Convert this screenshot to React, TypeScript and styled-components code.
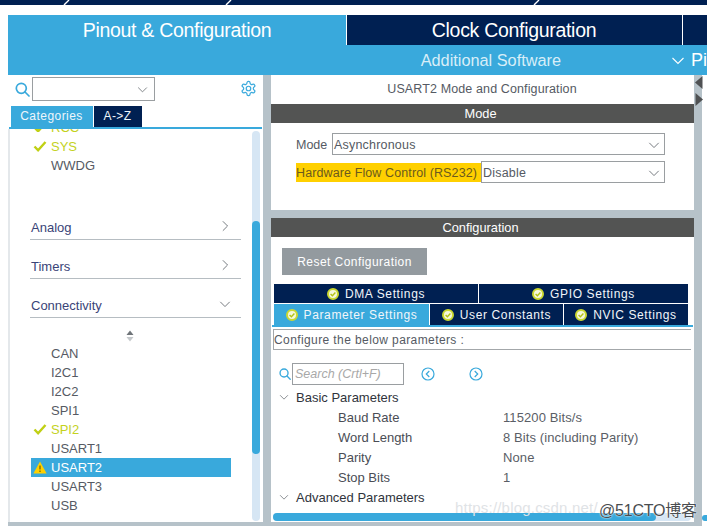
import React from "react";
import styled, { createGlobalStyle } from "styled-components";

const BLUE = "#39a9dc";
const NAVY = "#002052";
const GREY = "#b6c2c9";
const DARK = "#535453";

const Global = createGlobalStyle`
  html, body { margin: 0; padding: 0; background: #fff; }
  body { font-family: "Liberation Sans", Arial, sans-serif; width: 707px; height: 526px; overflow: hidden; position: relative; }
  * { box-sizing: border-box; }
`;

const Page = styled.div`display: flex; flex-direction: column; width: 707px; height: 526px; overflow: hidden; position: relative;`;
const TopStrip = styled.svg`display: block; width: 707px; height: 5px; flex: none; margin-bottom: 10px;`;

const Header = styled.div`display: flex; height: 60px; margin-left: 8px; flex: none;`;
const MainTab = styled.div`
  width: 338px; flex: none; background: ${BLUE}; color: #fff; font-size: 19.5px; text-align: center; padding-top: 4px; line-height: 23px; letter-spacing: -0.3px;
`;
const HeaderRight = styled.div`flex: 1; min-width: 0; display: flex; flex-direction: column; padding-left: 1px; background: linear-gradient(#fff 30px, ${BLUE} 30px);`;
const HeaderTop = styled.div`display: flex; height: 30px; gap: 1px;`;
const ClockTab = styled.div`width: 335px; flex: none; background: ${NAVY}; color: #fff; font-size: 19.5px; text-align: center; line-height: 30px; padding-right: 1px; letter-spacing: -0.3px;`;
const NextTab = styled.div`flex: 1; background: ${NAVY};`;
const HeaderBottom = styled.div`height: 30px; margin-left: -1px; background: ${BLUE}; display: flex; align-items: center;`;
const SoftWrap = styled.div`width: 325px; flex: none; text-align: right; font-size: 16.3px; padding-right: 110px; white-space: nowrap; color: #d8eef8;`;
const PinLabel = styled.div`font-size: 18px; color: #fff; margin-left: 6px;`;

const Body = styled.div`
  flex: 1; display: flex; margin-left: 8px; width: 694px; background: ${GREY}; padding-bottom: 4px; min-height: 0; position: relative;
`;
const LeftPanel = styled.div`width: 255px; flex: none; background: #fff; display: flex; flex-direction: column; min-height: 0;`;
const SearchRow = styled.div`display: flex; align-items: center; height: 27px; padding: 1px 6px 0 7px; margin-bottom: 4px;`;
const MiniSelect = styled.div`
  width: 123px; height: 24px; border: 1px solid #9a9ea1; margin-left: 2px; display: flex; align-items: center; justify-content: flex-end; padding-right: 6px;
`;
const GearSlot = styled.div`margin-left: auto; display: flex; margin-top: -1px;`;
const CatTabs = styled.div`display: flex; gap: 1px; padding-left: 3px; height: 21px; flex: none;`;
const CatTab = styled.div<{ $active?: boolean }>`
  background: ${(p) => (p.$active ? BLUE : NAVY)}; color: #eef6fb; width: ${(p) => (p.$active ? 82 : 48)}px; font-size: 12px; letter-spacing: 0.45px;
  line-height: 21px; text-align: center; padding-right: 1px;
`;
const CatLine = styled.div`height: 2px; background: ${BLUE}; margin: 0 1px; flex: none;`;
const ListArea = styled.div`flex: 1; position: relative; overflow: hidden; border-left: 2px solid #e4e8eb; min-height: 0;`;
const ClippedTop = styled.div`height: 3px; overflow: hidden; margin-bottom: 5px; position: relative;`;
const ClippedText = styled.div`margin-top: -11px;`;
const ItemRow = styled.div<{ $selected?: boolean; $state?: "ok" | "warn" }>`
  height: 19px; width: 200px; margin-left: 21px; display: flex; align-items: center; padding-left: 20px; position: relative;
  font-size: 13px;
  color: ${(p) => (p.$selected ? "#fff" : p.$state === "ok" ? "#c4d21e" : "#565a63")};
  background: ${(p) => (p.$selected ? BLUE : "transparent")};
`;
const ItemIcon = styled.span`position: absolute; left: 2px; top: 3px; display: flex;`;
const Group = styled.div<{ $gap: number }>`
  margin: ${(p) => p.$gap}px 0 0 20px; width: 211px; height: 22px; border-bottom: 1px solid #b6bdc2; display: flex; justify-content: space-between; align-items: flex-start;
  padding: 0 10px 0 1px; font-size: 13px; color: #3a4478; line-height: 19px;
  svg { margin-top: 2px; }
`;
const Sorter = styled.div`margin: 9px 0 0 0; height: 17px; padding-left: 116px; display: flex; align-items: center;`;
const VTrack = styled.div`position: absolute; right: 3px; top: 2px; bottom: 1px; width: 8px; border-radius: 4px; background: #d6e6f4;`;
const VThumb = styled.div`position: absolute; left: 0; right: 0; top: 90px; height: 233px; border-radius: 4px; background: ${BLUE};`;

const Splitter = styled.div`width: 8px; flex: none;`;
const RightPanel = styled.div`width: 423px; flex: none; display: flex; flex-direction: column; min-height: 0;`;
const ModeSection = styled.div`height: 135px; flex: none; background: #fff; margin-bottom: 8px;`;
const PanelTitle = styled.div`height: 29px; text-align: center; font-size: 12.5px; line-height: 29px; color: #555a63; padding-right: 1px; letter-spacing: 0.12px;`;
const SectionBar = styled.div`height: 19px; background: ${DARK}; color: #fff; font-size: 12.8px; text-align: center; line-height: 19px; flex: none; padding-right: 4px;`;
const FormRow = styled.div<{ $top: number }>`display: flex; align-items: center; margin: ${(p) => p.$top}px 0 0 25px; height: 22px; font-size: 12.5px; color: #555a63; width: 369px;`;
const ModeLabel = styled.div`width: 36px; flex: none; padding-top: 1px;`;
const FlowLabel = styled.div`width: 185px; flex: none; background: #ffd000; height: 19px; line-height: 20px; color: #6b5a1e; white-space: nowrap; letter-spacing: 0.11px;`;
const SelectBox = styled.div`
  flex: 1; height: 22px; border: 1px solid #9a9ea1; display: flex; align-items: center; justify-content: space-between; padding: 1px 4px 0 1px;
  color: #555a63; letter-spacing: 0.2px;
`;

const ConfigSection = styled.div`flex: 1; background: #fff; display: flex; flex-direction: column; position: relative; overflow: hidden; min-height: 0;`;
const ResetButton = styled.div`
  width: 145px; height: 27px; margin: 11px 0 0 11px; background: #939a9f; color: #fff; font-size: 12px; letter-spacing: 0.45px; line-height: 28px; text-align: center; flex: none;
`;
const TabRow = styled.div<{ $top: number; $h: number }>`display: flex; margin: ${(p) => p.$top}px 0 0 3px; width: 414px; height: ${(p) => p.$h}px; gap: 1px; flex: none;`;
const SetTab = styled.div<{ $w?: number; $active?: boolean }>`
  ${(p) => (p.$w ? `width: ${p.$w}px; flex: none;` : "flex: 1;")}
  background: ${(p) => (p.$active ? BLUE : NAVY)}; color: #f2f6fa; font-size: 12px; letter-spacing: 0.62px; padding-top: 1px;
  display: flex; align-items: center; justify-content: center; gap: 6px; white-space: nowrap;
`;
const TabLine = styled.div`height: 2px; background: ${BLUE}; margin: 0 1px; flex: none;`;
const ConfigureBox = styled.div`
  height: 21px; margin: 2px 3px 0 2px; border: 1px solid #a3a7aa; border-right: 0; font-size: 12px; color: #555a63; letter-spacing: 0.4px; line-height: 20px; flex: none;
`;
const SearchTools = styled.div`display: flex; align-items: center; height: 22px; margin: 13px 0 0 8px; flex: none;`;
const SearchInput = styled.div`
  width: 112px; height: 22px; margin-left: 1px; border: 1px solid #9a9ea1; color: #a8a8a8; font-style: italic; font-size: 12.5px; line-height: 20px; padding-left: 2px; white-space: nowrap; overflow: hidden;
`;
const NavSlot = styled.div<{ $left: number }>`margin-left: ${(p) => p.$left}px; display: flex;`;
const Tree = styled.div`margin-top: 2px; font-size: 13px; height: 127px; overflow: hidden; flex: none;`;
const TreeHead = styled.div`height: 20px; display: flex; align-items: center; color: #30343c; padding-left: 8px; gap: 7px;`;
const TreeRow = styled.div`height: 20px; display: flex; align-items: center; padding-left: 67px; color: #4a4d55;`;
const TreeKey = styled.div`width: 165px; flex: none;`;
const TreeValue = styled.div`color: #5a5e66; letter-spacing: 0.1px;`;
const HTrack = styled.div`position: absolute; left: 2px; width: 418px; bottom: 1px; height: 8px; border-radius: 4px; background: #d6e6f4;`;
const HThumb = styled.div`position: absolute; left: 0; top: 0; bottom: 0; width: 383px; border-radius: 4px; background: ${BLUE};`;
const RightEdgeBlob = styled.div`position: absolute; left: 702px; top: 515px; width: 8px; height: 6px; border-radius: 4px 0 0 4px; background: ${BLUE};`;
const Watermark = styled.div`position: absolute; left: 455px; top: 499px; font-size: 15px; color: #dfe3e6; white-space: nowrap; letter-spacing: 0.2px;`;
const Watermark2 = styled.div`
  position: absolute; left: 599px; top: 497px; font-size: 16px; color: #4a4d50; white-space: nowrap; letter-spacing: -0.2px;
  font-family: "Liberation Sans", "Noto Sans CJK SC", sans-serif; text-shadow: 0 0 1px #fff, 0 0 2px #fff;
`;
const ArrowStack = styled.div`position: absolute; left: 686.5px; top: 1px; display: flex; flex-direction: column; gap: 4px;`;

const Chevron = ({ dir = "down", size = 14, color = "#6f7479" }: { dir?: "down" | "right"; size?: number; color?: string }) => (
  <svg width={size} height={size} viewBox="0 0 14 14" fill="none" stroke={color} strokeWidth="1.1">
    {dir === "down" ? <path d="M1.5 4.5 7 10l5.5-5.5" /> : <path d="M4.5 1.5 10 7l-5.5 5.5" />}
  </svg>
);
const Magnifier = ({ size = 15 }: { size?: number }) => (
  <svg width={size} height={size} viewBox="0 0 15 15" fill="none" stroke={BLUE} strokeWidth="1.7">
    <circle cx="6.3" cy="6.3" r="5" />
    <path d="m10 10 4 4" strokeLinecap="round" />
  </svg>
);
const Gear = () => (
  <svg width="17" height="17" viewBox="0 0 24 24" fill="none" stroke={BLUE} strokeWidth="1.7" strokeLinejoin="round">
    <path d="M12.2 2h-.4a2 2 0 0 0-2 2v.2a2 2 0 0 1-1 1.7l-.4.3a2 2 0 0 1-2 0l-.2-.1a2 2 0 0 0-2.7.7l-.2.4a2 2 0 0 0 .7 2.7l.2.1a2 2 0 0 1 1 1.7v.5a2 2 0 0 1-1 1.8l-.2.1a2 2 0 0 0-.7 2.7l.2.4a2 2 0 0 0 2.7.7l.2-.1a2 2 0 0 1 2 0l.4.3a2 2 0 0 1 1 1.7v.2a2 2 0 0 0 2 2h.4a2 2 0 0 0 2-2v-.2a2 2 0 0 1 1-1.7l.4-.3a2 2 0 0 1 2 0l.2.1a2 2 0 0 0 2.7-.7l.2-.4a2 2 0 0 0-.7-2.7l-.2-.1a2 2 0 0 1-1-1.8v-.5a2 2 0 0 1 1-1.7l.2-.1a2 2 0 0 0 .7-2.7l-.2-.4a2 2 0 0 0-2.7-.7l-.2.1a2 2 0 0 1-2 0l-.4-.3a2 2 0 0 1-1-1.7V4a2 2 0 0 0-2-2Z" />
    <circle cx="12" cy="12" r="3.2" />
  </svg>
);
const Tick = () => (
  <svg width="14" height="13" viewBox="0 0 14 13" fill="none" stroke="#c0d014" strokeWidth="2.4">
    <path d="m1.5 6.5 3.6 3.8L12.5 2" />
  </svg>
);
const Warn = () => (
  <svg width="14" height="13" viewBox="0 0 14 13">
    <path d="M7 .6 13.6 12.4H.4Z" fill="#ffd000" />
    <path d="M7 4.4v4.2M7 9.6v1.3" stroke="#5b5200" strokeWidth="1.1" />
  </svg>
);
const TabCheck = () => (
  <svg width="12" height="12" viewBox="0 0 12 12" style={{ flex: "none" }}>
    <circle cx="6" cy="6" r="5" fill="#f6f8dc" stroke="#cbd830" strokeWidth="2" />
    <path d="m3.6 6 1.8 1.8L8.4 4.6" fill="none" stroke="#b4c214" strokeWidth="1.4" />
  </svg>
);
const NavCircle = ({ dir }: { dir: "l" | "r" }) => (
  <svg width="14" height="14" viewBox="0 0 14 14" fill="none" stroke={BLUE} strokeWidth="1.2">
    <circle cx="7" cy="7" r="6" />
    <path d={dir === "l" ? "M8.3 4 5.3 7l3 3" : "M5.7 4l3 3-3 3"} />
  </svg>
);

const connectivity: { name: string; state?: "ok" | "warn"; selected?: boolean }[] = [
  { name: "CAN" },
  { name: "I2C1" },
  { name: "I2C2" },
  { name: "SPI1" },
  { name: "SPI2", state: "ok" },
  { name: "USART1" },
  { name: "USART2", state: "warn", selected: true },
  { name: "USART3" },
  { name: "USB" },
];

const params = [
  ["Baud Rate", "115200 Bits/s"],
  ["Word Length", "8 Bits (including Parity)"],
  ["Parity", "None"],
  ["Stop Bits", "1"],
];

export default function App() {
  return (
    <Page>
      <Global />
      <TopStrip viewBox="0 0 707 5">
        <rect width="707" height="5" fill={NAVY} />
        <path d="M64 5l5-5M226 5l5-5M534 5l5-5" stroke="#fff" strokeWidth="1.4" />
      </TopStrip>
      <Header>
        <MainTab>Pinout &amp; Configuration</MainTab>
        <HeaderRight>
          <HeaderTop>
            <ClockTab>Clock Configuration</ClockTab>
            <NextTab />
          </HeaderTop>
          <HeaderBottom>
            <SoftWrap>Additional Software</SoftWrap>
            <Chevron size={15} color="#fff" />
            <PinLabel>Pi</PinLabel>
          </HeaderBottom>
        </HeaderRight>
      </Header>
      <Body>
        <LeftPanel>
          <SearchRow>
            <Magnifier />
            <MiniSelect>
              <Chevron size={11} />
            </MiniSelect>
            <GearSlot>
              <Gear />
            </GearSlot>
          </SearchRow>
          <CatTabs>
            <CatTab $active>Categories</CatTab>
            <CatTab>A-&gt;Z</CatTab>
          </CatTabs>
          <CatLine />
          <ListArea>
            <ClippedTop>
              <ClippedText>
                <ItemRow $state="ok">
                  <ItemIcon>
                    <Tick />
                  </ItemIcon>
                  RCC
                </ItemRow>
              </ClippedText>
            </ClippedTop>
            <ItemRow $state="ok">
              <ItemIcon>
                <Tick />
              </ItemIcon>
              SYS
            </ItemRow>
            <ItemRow>WWDG</ItemRow>
            <Group $gap={43}>
              Analog
              <Chevron dir="right" size={12} />
            </Group>
            <Group $gap={17}>
              Timers
              <Chevron dir="right" size={12} />
            </Group>
            <Group $gap={17}>
              Connectivity
              <Chevron size={12} />
            </Group>
            <Sorter>
              <svg width="8" height="12" viewBox="0 0 8 12">
                <path d="M4 0.5 7.5 5H.5Z" fill="#6f7479" />
                <path d="M4 11.5.5 7h7Z" fill="#c4c8cb" />
              </svg>
            </Sorter>
            {connectivity.map((c) => (
              <ItemRow key={c.name} $state={c.state} $selected={c.selected}>
                {c.state === "ok" && (
                  <ItemIcon>
                    <Tick />
                  </ItemIcon>
                )}
                {c.state === "warn" && (
                  <ItemIcon>
                    <Warn />
                  </ItemIcon>
                )}
                {c.name}
              </ItemRow>
            ))}
            <VTrack>
              <VThumb />
            </VTrack>
          </ListArea>
        </LeftPanel>
        <Splitter />
        <RightPanel>
          <ModeSection>
            <PanelTitle>USART2 Mode and Configuration</PanelTitle>
            <SectionBar>Mode</SectionBar>
            <FormRow $top={10}>
              <ModeLabel>Mode</ModeLabel>
              <SelectBox>
                Asynchronous
                <Chevron size={12} />
              </SelectBox>
            </FormRow>
            <FormRow $top={6}>
              <FlowLabel>Hardware Flow Control (RS232)</FlowLabel>
              <SelectBox>
                Disable
                <Chevron size={12} />
              </SelectBox>
            </FormRow>
          </ModeSection>
          <ConfigSection>
            <SectionBar>Configuration</SectionBar>
            <ResetButton>Reset Configuration</ResetButton>
            <TabRow $top={9} $h={19}>
              <SetTab $w={204}>
                <TabCheck />
                DMA Settings
              </SetTab>
              <SetTab>
                <TabCheck />
                GPIO Settings
              </SetTab>
            </TabRow>
            <TabRow $top={1} $h={21}>
              <SetTab $w={155} $active>
                <TabCheck />
                Parameter Settings
              </SetTab>
              <SetTab $w={133}>
                <TabCheck />
                User Constants
              </SetTab>
              <SetTab>
                <TabCheck />
                NVIC Settings
              </SetTab>
            </TabRow>
            <TabLine />
            <ConfigureBox>Configure the below parameters :</ConfigureBox>
            <SearchTools>
              <Magnifier size={12} />
              <SearchInput>Search (Crtl+F)</SearchInput>
              <NavSlot $left={17}>
                <NavCircle dir="l" />
              </NavSlot>
              <NavSlot $left={34}>
                <NavCircle dir="r" />
              </NavSlot>
            </SearchTools>
            <Tree>
              <TreeHead>
                <Chevron size={10} />
                Basic Parameters
              </TreeHead>
              {params.map(([k, v]) => (
                <TreeRow key={k}>
                  <TreeKey>{k}</TreeKey>
                  <TreeValue>{v}</TreeValue>
                </TreeRow>
              ))}
              <TreeHead>
                <Chevron size={10} />
                Advanced Parameters
              </TreeHead>
              <TreeRow>
                <TreeKey>Data Direction</TreeKey>
                <TreeValue>Receive and Transmit</TreeValue>
              </TreeRow>
            </Tree>
            <HTrack>
              <HThumb />
            </HTrack>
          </ConfigSection>
        </RightPanel>
        <ArrowStack>
          <svg width="8" height="13" viewBox="0 0 8 13"><path d="M7.5 0v13L0 6.5Z" fill="#4f5153" /></svg>
          <svg width="8" height="13" viewBox="0 0 8 13"><path d="M.5 0v13L8 6.5Z" fill="#4f5153" /></svg>
        </ArrowStack>
      </Body>
      <RightEdgeBlob />
      <Watermark>https://blog.csdn.net/</Watermark>
      <Watermark2>@51CTO博客</Watermark2>
    </Page>
  );
}
